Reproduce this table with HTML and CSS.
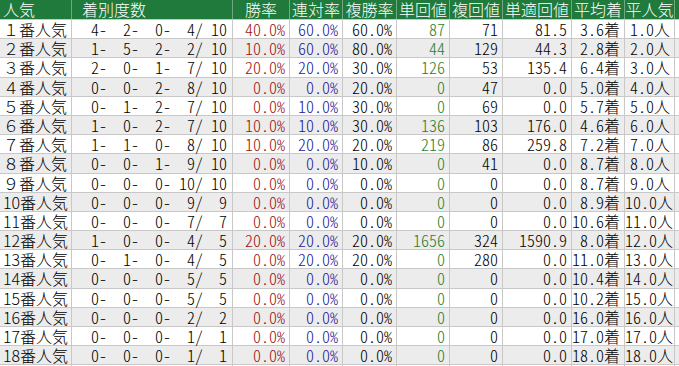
FILE: index.html
```html
<!DOCTYPE html>
<html lang="ja">
<head>
<meta charset="utf-8">
<link rel="stylesheet" href="styles.css">
</head>
<body>
<div class="sheet">
  <div class="row head">
    <div class="c name">人気</div>
    <div class="c tally-h">着別度数</div>
    <div class="c">勝率</div>
    <div class="c">連対率</div>
    <div class="c">複勝率</div>
    <div class="c">単回値</div>
    <div class="c">複回値</div>
    <div class="c">単適回値</div>
    <div class="c">平均着</div>
    <div class="c">平人気</div>
  </div>
  <div class="row"><div class="c name">１番人気</div><div class="c tally">4-  2-  0-  4/ 10</div><div class="c win">40.0%</div><div class="c ren">60.0%</div><div class="c">60.0%</div><div class="c tan">87</div><div class="c">71</div><div class="c">81.5</div><div class="c">3.6着</div><div class="c">1.0人</div></div>
  <div class="row alt"><div class="c name">２番人気</div><div class="c tally">1-  5-  2-  2/ 10</div><div class="c win">10.0%</div><div class="c ren">60.0%</div><div class="c">80.0%</div><div class="c tan">44</div><div class="c">129</div><div class="c">44.3</div><div class="c">2.8着</div><div class="c">2.0人</div></div>
  <div class="row"><div class="c name">３番人気</div><div class="c tally">2-  0-  1-  7/ 10</div><div class="c win">20.0%</div><div class="c ren">20.0%</div><div class="c">30.0%</div><div class="c tan">126</div><div class="c">53</div><div class="c">135.4</div><div class="c">6.4着</div><div class="c">3.0人</div></div>
  <div class="row alt"><div class="c name">４番人気</div><div class="c tally">0-  0-  2-  8/ 10</div><div class="c win">0.0%</div><div class="c ren">0.0%</div><div class="c">20.0%</div><div class="c tan">0</div><div class="c">47</div><div class="c">0.0</div><div class="c">5.0着</div><div class="c">4.0人</div></div>
  <div class="row"><div class="c name">５番人気</div><div class="c tally">0-  1-  2-  7/ 10</div><div class="c win">0.0%</div><div class="c ren">10.0%</div><div class="c">30.0%</div><div class="c tan">0</div><div class="c">69</div><div class="c">0.0</div><div class="c">5.7着</div><div class="c">5.0人</div></div>
  <div class="row alt"><div class="c name">６番人気</div><div class="c tally">1-  0-  2-  7/ 10</div><div class="c win">10.0%</div><div class="c ren">10.0%</div><div class="c">30.0%</div><div class="c tan">136</div><div class="c">103</div><div class="c">176.0</div><div class="c">4.6着</div><div class="c">6.0人</div></div>
  <div class="row"><div class="c name">７番人気</div><div class="c tally">1-  1-  0-  8/ 10</div><div class="c win">10.0%</div><div class="c ren">20.0%</div><div class="c">20.0%</div><div class="c tan">219</div><div class="c">86</div><div class="c">259.8</div><div class="c">7.2着</div><div class="c">7.0人</div></div>
  <div class="row alt"><div class="c name">８番人気</div><div class="c tally">0-  0-  1-  9/ 10</div><div class="c win">0.0%</div><div class="c ren">0.0%</div><div class="c">10.0%</div><div class="c tan">0</div><div class="c">41</div><div class="c">0.0</div><div class="c">8.7着</div><div class="c">8.0人</div></div>
  <div class="row"><div class="c name">９番人気</div><div class="c tally">0-  0-  0- 10/ 10</div><div class="c win">0.0%</div><div class="c ren">0.0%</div><div class="c">0.0%</div><div class="c tan">0</div><div class="c">0</div><div class="c">0.0</div><div class="c">8.7着</div><div class="c">9.0人</div></div>
  <div class="row alt"><div class="c name">10番人気</div><div class="c tally">0-  0-  0-  9/  9</div><div class="c win">0.0%</div><div class="c ren">0.0%</div><div class="c">0.0%</div><div class="c tan">0</div><div class="c">0</div><div class="c">0.0</div><div class="c">8.9着</div><div class="c">10.0人</div></div>
  <div class="row"><div class="c name">11番人気</div><div class="c tally">0-  0-  0-  7/  7</div><div class="c win">0.0%</div><div class="c ren">0.0%</div><div class="c">0.0%</div><div class="c tan">0</div><div class="c">0</div><div class="c">0.0</div><div class="c">10.6着</div><div class="c">11.0人</div></div>
  <div class="row alt"><div class="c name">12番人気</div><div class="c tally">1-  0-  0-  4/  5</div><div class="c win">20.0%</div><div class="c ren">20.0%</div><div class="c">20.0%</div><div class="c tan">1656</div><div class="c">324</div><div class="c">1590.9</div><div class="c">8.0着</div><div class="c">12.0人</div></div>
  <div class="row"><div class="c name">13番人気</div><div class="c tally">0-  1-  0-  4/  5</div><div class="c win">0.0%</div><div class="c ren">20.0%</div><div class="c">20.0%</div><div class="c tan">0</div><div class="c">280</div><div class="c">0.0</div><div class="c">11.0着</div><div class="c">13.0人</div></div>
  <div class="row alt"><div class="c name">14番人気</div><div class="c tally">0-  0-  0-  5/  5</div><div class="c win">0.0%</div><div class="c ren">0.0%</div><div class="c">0.0%</div><div class="c tan">0</div><div class="c">0</div><div class="c">0.0</div><div class="c">10.4着</div><div class="c">14.0人</div></div>
  <div class="row"><div class="c name">15番人気</div><div class="c tally">0-  0-  0-  5/  5</div><div class="c win">0.0%</div><div class="c ren">0.0%</div><div class="c">0.0%</div><div class="c tan">0</div><div class="c">0</div><div class="c">0.0</div><div class="c">10.2着</div><div class="c">15.0人</div></div>
  <div class="row alt"><div class="c name">16番人気</div><div class="c tally">0-  0-  0-  2/  2</div><div class="c win">0.0%</div><div class="c ren">0.0%</div><div class="c">0.0%</div><div class="c tan">0</div><div class="c">0</div><div class="c">0.0</div><div class="c">16.0着</div><div class="c">16.0人</div></div>
  <div class="row"><div class="c name">17番人気</div><div class="c tally">0-  0-  0-  1/  1</div><div class="c win">0.0%</div><div class="c ren">0.0%</div><div class="c">0.0%</div><div class="c tan">0</div><div class="c">0</div><div class="c">0.0</div><div class="c">17.0着</div><div class="c">17.0人</div></div>
  <div class="row alt"><div class="c name">18番人気</div><div class="c tally">0-  0-  0-  1/  1</div><div class="c win">0.0%</div><div class="c ren">0.0%</div><div class="c">0.0%</div><div class="c tan">0</div><div class="c">0</div><div class="c">0.0</div><div class="c">18.0着</div><div class="c">18.0人</div></div>
  <div class="row blank"><div class="c name"></div><div class="c"></div><div class="c"></div><div class="c"></div><div class="c"></div><div class="c"></div><div class="c"></div><div class="c"></div><div class="c"></div><div class="c"></div></div>
</div>
</body>
</html>
```
FILE: styles.css
```css
html, body {
  margin: 0;
  padding: 0;
  background: #ffffff;
}
body {
  font-family: "Noto Sans CJK JP", sans-serif;
  font-feature-settings: "hwid" 1;
  font-weight: 300;
  font-size: 16px;
  color: #000;
}
.sheet {
  width: 679px;
  height: 366px;
  overflow: hidden;
}
.row {
  display: grid;
  grid-template-columns: 72px 161px 57px 53px 54px 53px 53px 69px 53px 50px;
  height: 19.2px;
  border-bottom: 1px solid #c8c8c8;
  box-sizing: border-box;
}
.row.alt {
  background: #ececec;
}
.row.blank {
  border-bottom: none;
}
.c {
  box-sizing: border-box;
  border-right: 1px solid #c8c8c8;
  text-align: right;
  padding-right: 4px;
  line-height: 18px;
  white-space: pre;
}
.c.name {
  font-feature-settings: normal;
  text-align: left;
  padding-left: 3px;
  padding-right: 0;
}
.c.tally {
  padding-right: 5px;
}
.row.head {
  height: 20px;
  background: #1f7a3b;
  color: #fff;
  border-bottom: 1px solid #c8c8c8;
}
.row.head .c {
  text-align: center;
  padding: 0;
  border-right: 1px solid #6fa883;
  line-height: 19px;
}
.row.head .c.name,
.row.head .c.tally-h {
  text-align: left;
  padding-left: 3px;
}
.row.head .c.tally-h {
  padding-left: 10px;
}
.win {
  color: #a01010;
}
.ren {
  color: #1a1a9a;
}
.tan {
  color: #2a7d2a;
}
```
